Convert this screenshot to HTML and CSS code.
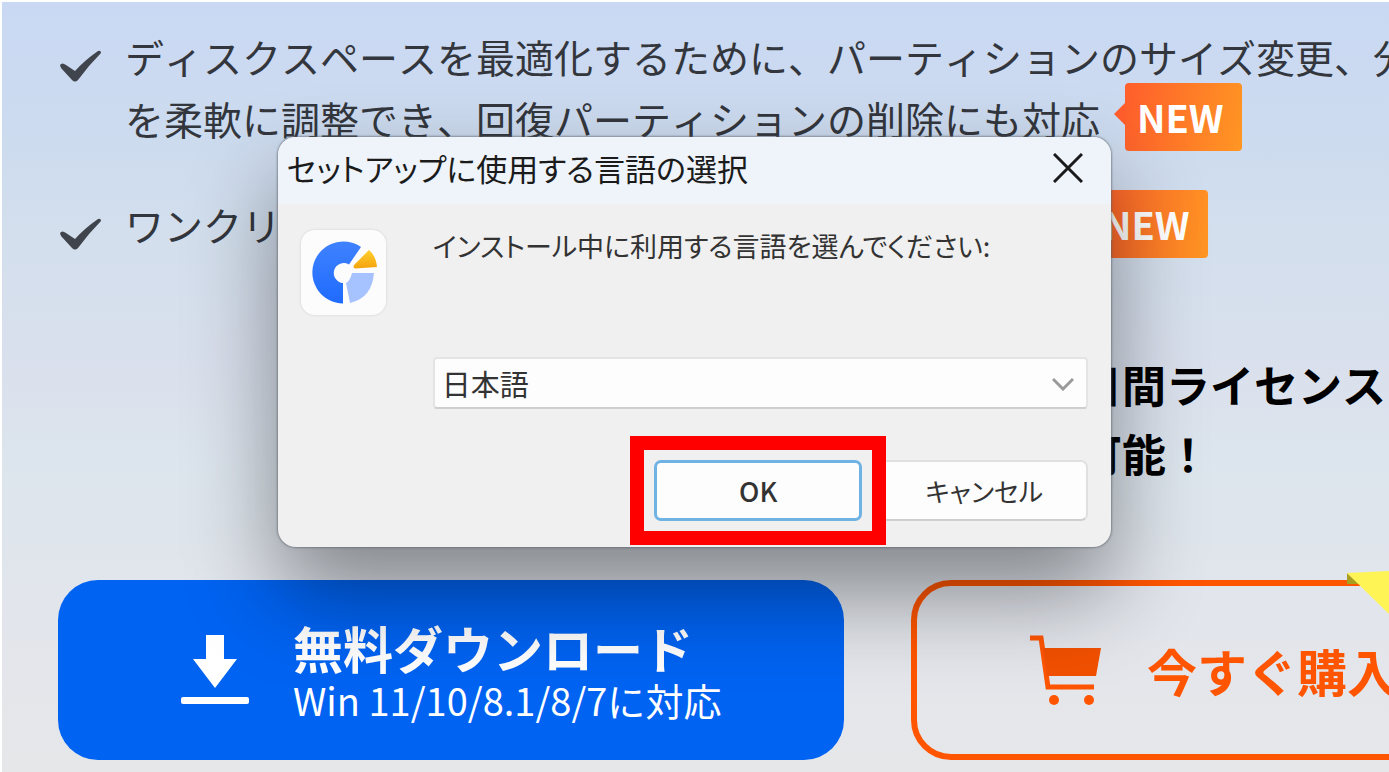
FILE: index.html
```html
<!DOCTYPE html>
<html lang="ja">
<head>
  <meta charset="UTF-8" />
  <meta name="viewport" content="width=device-width, initial-scale=1" />
  <title>セットアップに使用する言語の選択</title>
  <link rel="stylesheet" href="styles.css">
</head>
<body>

  <main class="page">
    <ul class="features">
      <li class="feature">
        <svg class="check" viewBox="0 0 44 34"><path d="M2 16 Q4 13 8 16 L17 22 Q27 11 40 2 Q43 1 43 4 Q31 16 20 31 Q17 34 14 31 L3 19 Z" fill="#40454d"/></svg>
        <p>ディスクスペースを最適化するために、パーティションのサイズ変更、分<br>を柔軟に調整でき、回復パーティションの削除にも対応<span class="badge">NEW</span></p>
      </li>
      <li class="feature">
        <svg class="check" viewBox="0 0 44 34"><path d="M2 16 Q4 13 8 16 L17 22 Q27 11 40 2 Q43 1 43 4 Q31 16 20 31 Q17 34 14 31 L3 19 Z" fill="#40454d"/></svg>
        <p class="covered">ワンクリ<span class="badge">NEW</span></p>
      </li>
    </ul>

    <p class="license">日間ライセンス<br>可能！</p>

    <div class="actions">
      <button type="button" class="btn download">
        <svg class="download-icon" viewBox="0 0 70 72">
          <path d="M26 1h18v24h13L35 54 13 25h13z" fill="#fff"/>
          <rect x="1" y="63" width="68" height="7" rx="2" fill="#fff"/>
        </svg>
        <span class="btn-text">
          <strong>無料ダウンロード</strong>
          <small>Win 11/10/8.1/8/7に対応</small>
        </span>
      </button>
      <button type="button" class="btn buy">
        <svg class="cart-icon" viewBox="0 0 74 72">
          <path d="M1 4h11l7 49h46" fill="none" stroke="#ff5500" stroke-width="5"/>
          <path d="M14 14h58l-5 28H18z" fill="#f25000"/>
          <circle cx="25" cy="66" r="5" fill="#ff5500"/>
          <circle cx="60" cy="66" r="5" fill="#ff5500"/>
        </svg>
        <strong>今すぐ購入</strong>
        <svg class="ribbon" viewBox="0 0 43 44">
          <path d="M0 2l12 11H0z" fill="#a89f20"/>
          <path d="M0 2L43 0v44z" fill="#fff455"/>
        </svg>
      </button>
    </div>
  </main>

  <div class="dialog" role="dialog" aria-labelledby="dialogTitle">
    <div class="titlebar">
      <h1 id="dialogTitle">セットアップに使用する言語の選択</h1>
      <button type="button" class="close" aria-label="閉じる">
        <svg viewBox="0 0 30 30"><path d="M1 1l28 28M29 1L1 29" stroke="#1b1b1b" stroke-width="3" fill="none"/></svg>
      </button>
    </div>
    <form class="dialog-body">
      <svg class="app-icon" viewBox="0 0 85 85">
        <defs>
          <linearGradient id="blue" x1="0" y1="0" x2="0" y2="1"><stop offset="0" stop-color="#3f82ff"/><stop offset="1" stop-color="#1f6bff"/></linearGradient>
          <linearGradient id="gold" x1="0" y1="0" x2="0" y2="1"><stop offset="0" stop-color="#ffd02e"/><stop offset="1" stop-color="#f5a30c"/></linearGradient>
        </defs>
        <rect width="85" height="85" rx="14" fill="#fcfcfc"/>
        <path d="M60 17A31 31 0 1 0 42 73.500V53A10 10 0 1 1 48 34.500Z" fill="url(#blue)"/>
        <path d="M68 20Q75 26 76 37L54 38.500Q51 37 54 34Z" fill="url(#gold)"/>
        <path d="M51 43H73Q71 68 49 73L45 53Q49 51 51 43Z" fill="#a6c2ff"/>
      </svg>
      <div class="fields">
        <label for="language">インストール中に利用する言語を選んでください:</label>
        <div class="select-wrap">
          <select id="language">
            <option>日本語</option>
          </select>
          <svg class="arrow" viewBox="0 0 22 14"><path d="M1 2l10 10L21 2" stroke="#9a9a9a" stroke-width="3" fill="none"/></svg>
        </div>
        <div class="dialog-buttons">
          <div class="highlight"><button type="button" class="ok">OK</button></div>
          <button type="button">キャンセル</button>
        </div>
      </div>
    </form>
  </div>

</body>
</html>
```
FILE: styles.css
```css
* {
  box-sizing: border-box;
}

body {
  margin: 0;
  padding: 2px 0 0 2px;
  position: relative;
  min-height: 100vh;
  background: #fff;
  font-family: "Noto Sans CJK JP", sans-serif;
  overflow: hidden;
}

h1,
p,
ul {
  margin: 0;
  padding: 0;
  font-weight: normal;
}

button,
select {
  font-family: inherit;
  cursor: pointer;
}

.page {
  min-height: calc(100vh - 2px);
  padding: 23px 0 12px 56px;
  background: linear-gradient(to bottom, #c9d9f3 0%, #cddbef 18%, #d3dfed 30%, #d9e0ed 45%, #dde5ed 62%, #e2e5ec 78%, #e6e7e9 100%);
  font-kerning: none;
  overflow: hidden;
}

.features {
  display: flex;
  flex-direction: column;
  gap: 44px;
  list-style: none;
}

.feature {
  display: flex;
  gap: 23px;
  color: #33373d;
  font-size: 39px;
  line-height: 62px;
  white-space: nowrap;
}

.check {
  flex: none;
  width: 44px;
  height: 34px;
  margin-top: 24px;
}

.badge {
  display: inline-block;
  position: relative;
  height: 68px;
  margin: -8px 0 -8px 25px;
  padding: 0 18px 0 12px;
  line-height: 68px;
  vertical-align: 2px;
  font-weight: bold;
  font-size: 38px;
  color: #fff;
  background: linear-gradient(100deg, #ff5e2c, #ff9623);
  border-radius: 4px;
}

.badge::before {
  content: "";
  position: absolute;
  left: -11px;
  top: 20px;
  border: solid transparent;
  border-width: 11px 11px 11px 0;
  border-right-color: #ff5e2c;
}

.covered {
  display: flex;
}

.covered .badge {
  margin: -3px 0 0 810px;
}

.license {
  margin: 92px 0 0 1020px;
  font-size: 44px;
  font-weight: bold;
  line-height: 69px;
  color: #000;
  white-space: nowrap;
}

.actions {
  display: flex;
  gap: 67px;
  margin-top: 92px;
}

.btn {
  position: relative;
  flex: none;
  display: flex;
  align-items: center;
  width: 786px;
  height: 180px;
  border: none;
  border-radius: 40px;
  text-align: left;
  white-space: nowrap;
}

.btn strong {
  font-size: 50px;
  line-height: 60px;
}

.download {
  gap: 43px;
  padding: 0 122px;
  background: #0063f2;
  color: #fff;
}

.download-icon {
  width: 70px;
  height: 72px;
}

.btn-text {
  display: flex;
  flex-direction: column;
}

.btn-text small {
  font-size: 38px;
  line-height: 46px;
}

.buy {
  gap: 44px;
  padding: 0 112px;
  border: 6px solid #ff5500;
  background: none;
  color: #ff5500;
}

.cart-icon {
  width: 74px;
  height: 72px;
}

.ribbon {
  position: absolute;
  top: -15px;
  left: 430px;
  width: 43px;
  height: 44px;
}

/* setup dialog */
.dialog {
  position: absolute;
  top: 137px;
  left: 20%;
  width: 60%;
  background: #f0f0f0;
  border-radius: 18px;
  box-shadow: 0 0 2px 1px rgba(90, 95, 105, 0.6), 0 46px 90px rgba(0, 0, 0, 0.42);
  color: #333;
  font-feature-settings: "palt";
}

.titlebar {
  display: flex;
  align-items: center;
  justify-content: space-between;
  height: 67px;
  padding: 0 28px 6px 9px;
  background: #eef4fa;
  border-radius: 18px 18px 0 0;
}

.titlebar h1 {
  font-size: 31px;
  line-height: 40px;
  color: #1b1b1b;
}

.close {
  width: 30px;
  height: 30px;
  padding: 0;
  border: none;
  background: none;
}

.close svg {
  display: block;
}

.dialog-body {
  display: flex;
  gap: 47px;
  padding: 26px 23px;
}

.app-icon {
  flex: none;
  width: 85px;
  height: 85px;
  border-radius: 14px;
  box-shadow: 0 0 3px rgba(0, 0, 0, 0.12);
}

.fields {
  flex: 1;
}

.fields label {
  display: block;
  font-size: 27px;
  line-height: 32px;
  white-space: nowrap;
}

.select-wrap {
  position: relative;
  margin-top: 95px;
}

.select-wrap select {
  appearance: none;
  display: block;
  width: 100%;
  height: 52px;
  padding: 0 7px;
  border: 2px solid #e4e4e4;
  border-bottom-color: #cfcfcf;
  border-radius: 4px;
  background: #fdfdfd;
  color: #333;
  font-size: 29px;
}

.arrow {
  position: absolute;
  top: 20px;
  right: 14px;
  width: 22px;
  height: 14px;
  pointer-events: none;
}

.dialog-buttons {
  display: flex;
  justify-content: flex-end;
  gap: 18px;
  margin-top: 51px;
}

.dialog-buttons button {
  display: block;
  width: 208px;
  height: 61px;
  padding: 0;
  border: 2px solid #e0e0e0;
  border-bottom-color: #cfcfcf;
  border-radius: 7px;
  background: #fdfdfd;
  color: #333;
  font-size: 26px;
  font-feature-settings: "palt";
}

.dialog-buttons .ok {
  border: 3px solid #6fb2e4;
  font-size: 27px;
  font-weight: 500;
}

.highlight {
  position: relative;
}

.highlight::after {
  content: "";
  position: absolute;
  inset: -24px;
  border: 14px solid #ff0000;
  pointer-events: none;
}
```
